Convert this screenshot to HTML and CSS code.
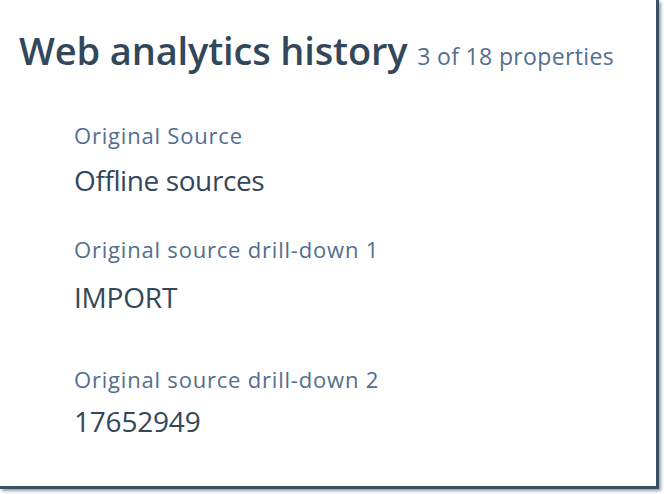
FILE: index.html
```html
<!DOCTYPE html>
<html>
<head>
<meta charset="utf-8">
<link rel="stylesheet" href="styles.css">
</head>
<body>
<div class="frame">
  <div class="card">
    <h1 class="title">Web analytics history <span class="count">3 of 18 properties</span></h1>
    <div class="props">
      <div class="prop prop-1">
        <div class="label">Original Source</div>
        <div class="value">Offline sources</div>
      </div>
      <div class="prop prop-2">
        <div class="label">Original source drill-down 1</div>
        <div class="value">IMPORT</div>
      </div>
      <div class="prop prop-3">
        <div class="label">Original source drill-down 2</div>
        <div class="value">17652949</div>
      </div>
    </div>
  </div>
</div>
</body>
</html>
```
FILE: styles.css
```css
html, body {
  margin: 0;
  padding: 0;
  background: #ffffff;
}
.frame {
  width: 664px;
  height: 494px;
  background: #ffffff;
}
.card {
  box-sizing: border-box;
  width: 659px;
  height: 489px;
  background: #ffffff;
  border-right: 3px solid #3d5166;
  border-bottom: 3px solid #3d5166;
  box-shadow: 2px 2px 3px rgba(61, 81, 102, 0.55);
  font-family: "Open Sans", Lato, sans-serif;
  color: #33475b;
}
.title {
  margin: 0;
  padding: 27px 0 0 19px;
  font-size: 38px;
  font-weight: 600;
  line-height: 46px;
  letter-spacing: -0.15px;
  color: #33475b;
}
.count {
  font-size: 23px;
  font-weight: 400;
  letter-spacing: 0.35px;
  color: #516f90;
}
.props {
  padding-left: 74px;
}
.label {
  font-size: 22px;
  line-height: 26px;
  letter-spacing: 0.8px;
  color: #516f90;
}
.value {
  font-size: 28px;
  line-height: 32px;
  letter-spacing: -0.2px;
  color: #33475b;
}
.prop-1 { margin-top: 43px; }
.prop-1 .value { margin-top: 16px; letter-spacing: -0.4px; }
.prop-2 { margin-top: 40px; }
.prop-2 .value { margin-top: 19px; }
.prop-3 { margin-top: 53px; }
.prop-3 .value { margin-top: 13px; }
```
